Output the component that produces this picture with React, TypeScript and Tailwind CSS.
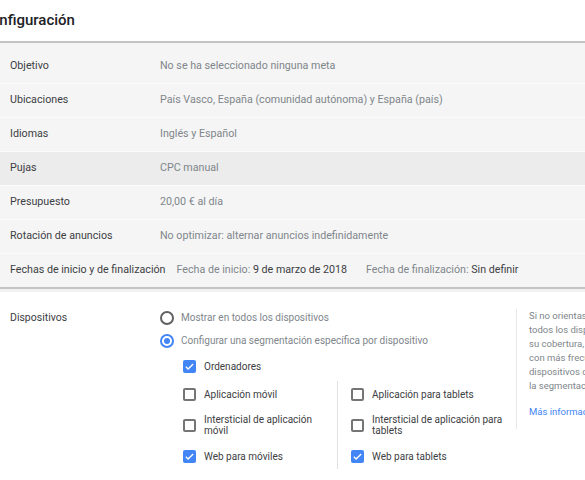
import React from "react";

const rows: { label: string; value: React.ReactNode; hover?: boolean }[] = [
  { label: "Objetivo", value: "No se ha seleccionado ninguna meta" },
  { label: "Ubicaciones", value: "País Vasco, España (comunidad autónoma) y España (país)" },
  { label: "Idiomas", value: "Inglés y Español" },
  { label: "Pujas", value: "CPC manual", hover: true },
  { label: "Presupuesto", value: "20,00 € al día" },
  { label: "Rotación de anuncios", value: "No optimizar: alternar anuncios indefinidamente" },
];

const Checkbox = ({ checked }: { checked?: boolean }) =>
  checked ? (
    <span className="w-[13px] h-[13px] shrink-0 rounded-[2px] bg-[#4285f4] flex items-center justify-center">
      <svg viewBox="0 0 24 24" className="w-[11px] h-[11px]" fill="none" stroke="white" strokeWidth="3">
        <path d="M4 12.5l5 5L20 6.5" />
      </svg>
    </span>
  ) : (
    <span className="w-[13px] h-[13px] shrink-0 rounded-[2px] border-2 border-[#757575]" />
  );

const Radio = ({ checked }: { checked?: boolean }) => (
  <span
    className={
      checked
        ? "w-[14px] h-[14px] rounded-full border-2 border-[#4285f4] flex items-center justify-center shrink-0"
        : "w-[14px] h-[14px] rounded-full border-2 border-[#616161] shrink-0"
    }
  >
    {checked && <span className="w-[6px] h-[6px] rounded-full bg-[#4285f4]" />}
  </span>
);

const Option = ({ checked, children }: { checked?: boolean; children: React.ReactNode }) => (
  <div className="flex items-center gap-2 h-[26px]">
    <Checkbox checked={checked} />
    <span className="text-[10px] leading-[11px] text-[#3c4043] whitespace-nowrap">{children}</span>
  </div>
);

export default function App() {
  return (
    <div
      className="w-[585px] h-[480px] overflow-hidden bg-white"
      style={{ fontFamily: "Roboto, 'Liberation Sans', sans-serif" }}
    >
      <div className="h-[41px] flex items-center">
        <h1 className="-ml-[19px] text-[15px] font-medium text-[#202124]">Configuración</h1>
      </div>

      <div className="border-t-2 border-[#c4c4c4] bg-[#f5f5f5] pt-[7px]">
        {rows.map((r) => (
          <div
            key={r.label}
            className={`h-[34px] flex items-center border-b border-[#fbfbfb] text-[10.7px] ${
              r.hover ? "bg-[#ececec]" : ""
            }`}
          >
            <span className="w-[160px] shrink-0 pl-[10px] text-[#3c4043]">{r.label}</span>
            <span className="text-[#80868b] whitespace-nowrap">{r.value}</span>
          </div>
        ))}
        <div className="h-[33px] flex items-center text-[10.7px] whitespace-nowrap">
          <span className="pl-[10px] pr-[11px] text-[#3c4043]">Fechas de inicio y de finalización</span>
          <span className="text-[#80868b]">
            Fecha de inicio: <span className="text-[#3c4043]">9 de marzo de 2018</span>
          </span>
          <span className="ml-[19px] text-[#80868b]">
            Fecha de finalización: <span className="text-[#3c4043]">Sin definir</span>
          </span>
        </div>
      </div>
      <div className="h-[2px] bg-[#c4c4c4]" />
      <div className="h-[3px] bg-[#f1f1f1]" />

      <div className="flex pt-[14px]">
        <div className="w-[160px] shrink-0 pl-[10px] text-[10.5px] text-[#3c4043] leading-[23px]">
          Dispositivos
        </div>
        <div className="w-[356px] shrink-0">
          <div className="flex items-center gap-[7px] h-[23px]">
            <Radio />
            <span className="text-[10px] text-[#80868b] whitespace-nowrap">Mostrar en todos los dispositivos</span>
          </div>
          <div className="flex items-center gap-[7px] h-[23px]">
            <Radio checked />
            <span className="text-[10px] text-[#80868b] whitespace-nowrap">
              Configurar una segmentación específica por dispositivo
            </span>
          </div>
          <div className="pl-[23px] pt-[1px]">
            <Option checked>Ordenadores</Option>
            <div className="flex mt-[2px]">
              <div className="w-[154px] shrink-0 flex flex-col">
                <Option>Aplicación móvil</Option>
                <div className="flex items-center gap-2 h-[36px]">
                  <Checkbox />
                  <span className="text-[10px] leading-[11px] text-[#3c4043] whitespace-nowrap">
                    Intersticial de aplicación
                    <br />
                    móvil
                  </span>
                </div>
                <Option checked>Web para móviles</Option>
              </div>
              <div className="border-l border-[#e0e0e0] pl-[13px] flex flex-col">
                <Option>Aplicación para tablets</Option>
                <div className="flex items-center gap-2 h-[36px]">
                  <Checkbox />
                  <span className="text-[10px] leading-[11px] text-[#3c4043] whitespace-nowrap">
                    Intersticial de aplicación para
                    <br />
                    tablets
                  </span>
                </div>
                <Option checked>Web para tablets</Option>
              </div>
            </div>
          </div>
        </div>
        <div className="border-l border-[#e8e8e8] pl-[12px] mt-[3px] h-[120px] shrink-0 w-[200px]">
          <p className="text-[9.5px] leading-[14px] text-[#80868b] whitespace-nowrap">
            Si no orientas tus anuncios a
            <br />
            todos los dispositivos, limitarás
            <br />
            su cobertura, especialmente
            <br />
            con más frecuencia en los
            <br />
            dispositivos que excluyas de
            <br />
            la segmentación.
          </p>
          <p className="mt-[12px] text-[9.5px] text-[#4285f4] whitespace-nowrap">Más información</p>
        </div>
      </div>
    </div>
  );
}
